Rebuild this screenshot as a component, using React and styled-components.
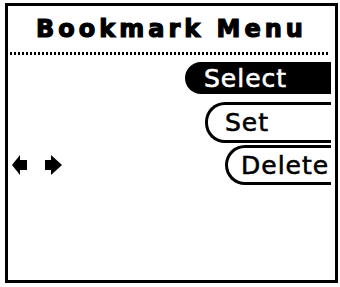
import styled, { createGlobalStyle } from "styled-components";

const GlobalStyle = createGlobalStyle`
  html, body {
    margin: 0;
    padding: 0;
    background: #fff;
  }
`;

const Screen = styled.div`
  box-sizing: border-box;
  width: 333px;
  height: 280px;
  margin: 3px 0 0 5px;
  border: 3px solid #000;
  background: #fff;
  display: flex;
  flex-direction: column;
  overflow: hidden;
  font-family: "DejaVu Sans", sans-serif;
  color: #000;
`;

const Title = styled.h1`
  margin: 0;
  padding: 12px 0 0 0;
  height: 22px;
  font-size: 24px;
  line-height: 22px;
  font-weight: bold;
  letter-spacing: 4px;
  -webkit-text-stroke: 1.2px #000;
  text-align: center;
  white-space: nowrap;
`;

const Divider = styled.div`
  height: 3px;
  margin: 12px 5px 0 2px;
  background: repeating-linear-gradient(to right, #000 0 2px, transparent 2px 4px);
`;

const Menu = styled.div`
  display: flex;
  flex-direction: column;
  margin-top: 7px;
  padding: 0 4px;
`;

const Row = styled.div`
  display: flex;
  align-items: center;
  justify-content: space-between;
  height: ${(p) => p.$height}px;
  margin-top: ${(p) => p.$gap || 0}px;
`;

const Item = styled.div`
  box-sizing: border-box;
  margin-left: auto;
  width: ${(p) => p.$width}px;
  height: 100%;
  display: flex;
  align-items: center;
  padding-left: ${(p) => p.$pad}px;
  overflow: hidden;
  white-space: nowrap;
  font-size: 25px;
  letter-spacing: 1px;
  -webkit-text-stroke: 0.6px currentColor;
  background: ${(p) => (p.$active ? "#000" : "#fff")};
  color: ${(p) => (p.$active ? "#fff" : "#000")};
  border: ${(p) => (p.$active ? "none" : "3px solid #000")};
  border-right: none;
  border-radius: ${(p) => (p.$active ? "16px 0 0 16px" : "20px 0 0 20px")};
`;

const Arrows = () => (
  <svg width="51" height="20" viewBox="0 0 51 20">
    <polygon points="0,10 8,0 8,20" fill="#000" />
    <rect x="8" y="5" width="7" height="10" fill="#000" />
    <rect x="33" y="5" width="6" height="10" fill="#000" />
    <polygon points="39,0 39,20 50,10" fill="#000" />
  </svg>
);

export default function App() {
  return (
    <>
      <GlobalStyle />
      <Screen>
        <Title>Bookmark Menu</Title>
        <Divider />
        <Menu>
          <Row $height={32}>
            <Item $active $width={146} $pad={19}>Select</Item>
          </Row>
          <Row $height={41} $gap={8}>
            <Item $width={126} $pad={17}>Set</Item>
          </Row>
          <Row $height={40} $gap={2}>
            <Arrows />
            <Item $width={106} $pad={13}>Delete</Item>
          </Row>
        </Menu>
      </Screen>
    </>
  );
}
